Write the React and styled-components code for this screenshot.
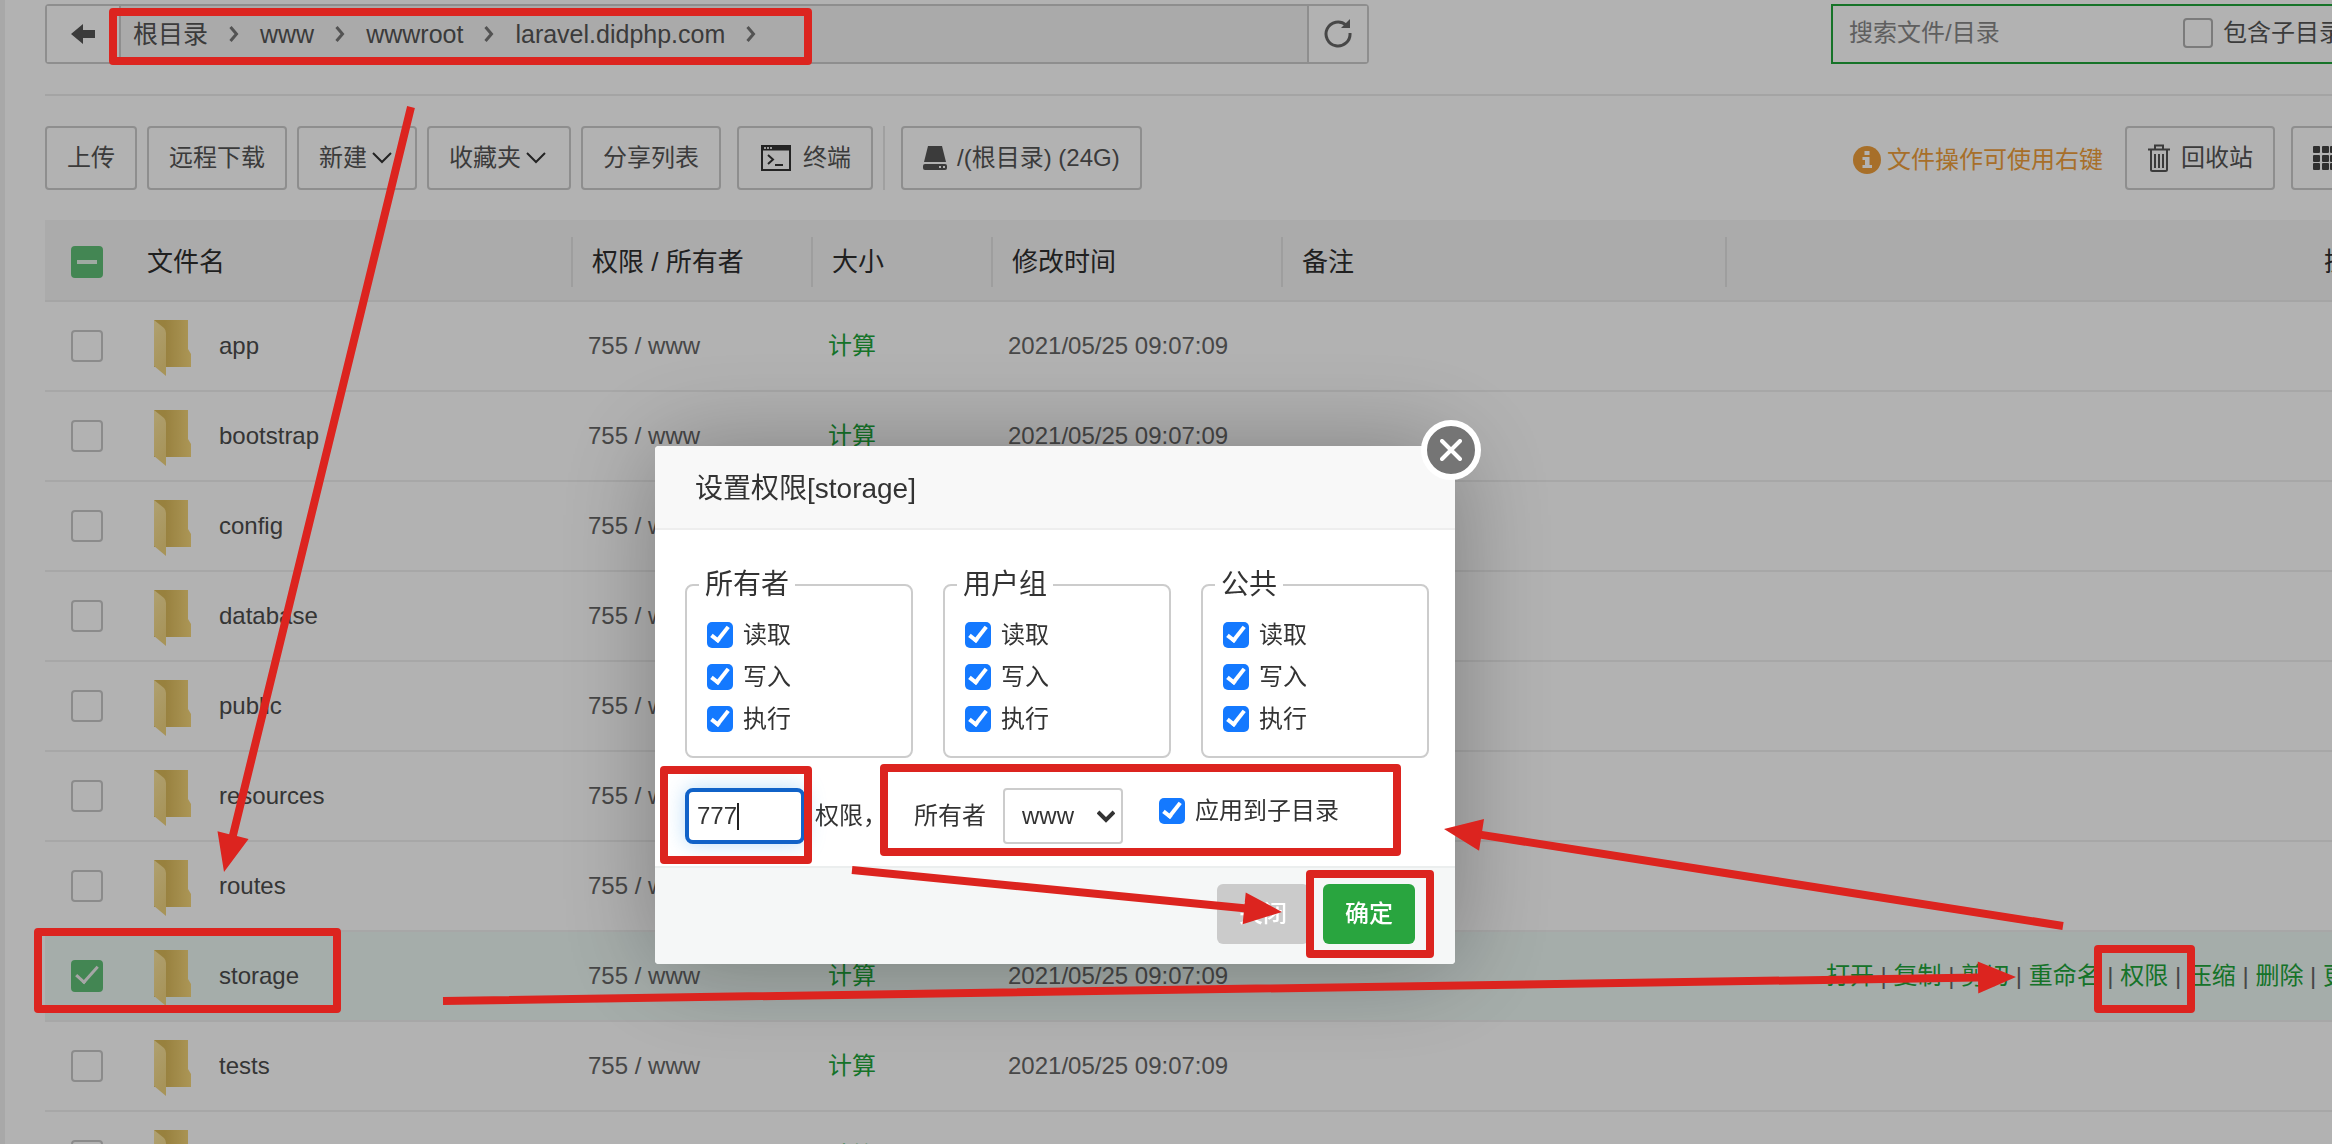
import React from "react";
import styled, { createGlobalStyle } from "styled-components";

const GlobalStyle = createGlobalStyle`
  * {
    box-sizing: border-box;
  }
  body {
    margin: 0;
    background: #fff;
    color: #555;
    font-family: "Liberation Sans", "Noto Sans CJK SC", sans-serif;
    font-size: 24px;
    line-height: 36px;
  }
  button, input, select {
    font: inherit;
    color: inherit;
  }
  a {
    color: #20a53a;
    text-decoration: none;
  }
`;

const Screen = styled.div`
  height: 100vh;
  overflow: hidden;
`;

// the file list is wider than the window, its right side runs off screen
const Page = styled.main`
  width: calc(100% + 60px);
  padding: 4px 0 0 40px;
  border-left: 5px solid #f1f1f1;
`;

const TopBar = styled.div`
  display: flex;
  justify-content: space-between;
  padding-bottom: 30px;
  border-bottom: 2px solid #ebebeb;
`;

const PathBar = styled.nav`
  display: flex;
  flex: 0 1 1324px;
  height: 60px;
  border: 2px solid #ccc;
  border-radius: 4px;
  background: #f4f4f4;
`;

const PathButton = styled.button`
  display: flex;
  align-items: center;
  justify-content: center;
  width: ${({ $wide }) => ($wide ? "74px" : "60px")};
  padding: 0;
  border: 0 solid #ccc;
  border-right-width: ${({ $wide }) => ($wide ? "2px" : "0")};
  border-left-width: ${({ $wide }) => ($wide ? "0" : "2px")};
  background: #fff;
`;

const Crumbs = styled.div`
  display: flex;
  align-items: center;
  flex: 1;
  gap: 21px;
  padding-left: 12px;
  font-size: 25px;

  a {
    color: #555;
  }
`;

const SearchBox = styled.div`
  display: flex;
  align-items: center;
  flex: 0 0 561px;
  height: 60px;
  padding: 0 16px 2px;
  border: 2px solid #20a53a;
`;

const SearchInput = styled.input`
  width: 334px;
  padding: 0;
  border: 0;
  outline: 0;
  background: none;

  &::placeholder {
    color: #888;
  }
`;

const CheckLabel = styled.label`
  display: flex;
  align-items: center;
  gap: 10px;
`;

const Checkbox = styled.input`
  appearance: none;
  display: flex;
  justify-content: center;
  width: 32px;
  height: 32px;
  margin: 0;
  border: 2px solid #c8c8c8;
  border-radius: 4px;

  &:checked {
    border-color: #60c177;
    background: #60c177;
  }
  &:checked::after {
    content: "";
    width: 9px;
    height: 19px;
    margin-top: -1px;
    border: solid #eee;
    border-width: 0 3px 3px 0;
    transform: rotate(42deg);
  }
`;

const PartialCheckbox = styled(Checkbox)`
  align-items: center;

  &:checked::after {
    width: 20px;
    height: 4px;
    margin: 0;
    border: 0;
    background: #e4f4e8;
    transform: none;
  }
`;

const SearchCheckbox = styled(Checkbox)`
  width: 30px;
  height: 30px;
  border-color: #b0b0b0;
`;

const Toolbar = styled.div`
  display: flex;
  align-items: center;
  gap: 10px;
  padding: 30px 0;
`;

const ToolButton = styled.button`
  display: flex;
  align-items: center;
  height: 64px;
  padding: 0 20px;
  margin-left: ${({ $apart }) => ($apart ? "6px" : "0")};
  border: 2px solid #ccc;
  border-radius: 4px;
  background: #fff;
  white-space: nowrap;
`;

const Caret = styled.svg`
  margin: 0 3px 0 5px;
`;

const TermIcon = styled.svg`
  margin: 0 12px 0 2px;
`;

const ButtonIcon = styled.svg`
  margin-right: 10px;
`;

const Divider = styled.span`
  width: 2px;
  height: 64px;
  background: #e6e6e6;
`;

const Tip = styled.div`
  display: flex;
  align-items: center;
  gap: 6px;
  margin: 4px 12px 0 auto;
  color: #f0a03c;
`;

const ViewSwitch = styled(ToolButton)`
  width: 101px;
`;

const FileTable = styled.table`
  width: 100%;
  table-layout: fixed;
  border-collapse: collapse;
`;

const HeadRow = styled.tr`
  height: 81px;
  background: #f5f5f5;
  border-bottom: 2px solid #ececec;
`;

const HeadCell = styled.th`
  padding: 4px 0 0;
  color: #2e2e2e;
  font-size: 26px;
  font-weight: 400;
  text-align: left;
`;

const HeadLabel = styled.div`
  padding-left: 19px;
  border-left: 2px solid #e2e2e2;
  line-height: 50px;
`;

const OpsHead = styled(HeadLabel)`
  padding-right: 16px;
  text-align: right;
`;

const Row = styled.tr`
  height: 90px;
  border-bottom: 2px solid #efefef;
  background: ${({ $active }) => ($active ? "#edf8f4" : "#fff")};
`;

const Cell = styled.td`
  padding: 0 0 0 17px;
  color: #666;
  white-space: nowrap;
`;

const CheckCell = styled.td`
  padding: 0 0 0 26px;
`;

const CheckHead = styled.th`
  padding: 3px 0 0 26px;
`;

const NameCell = styled.div`
  display: flex;
  align-items: center;
  gap: 27px;
  padding-left: 6px;
  color: #4c4c4c;

  svg {
    margin-top: 3px;
  }
`;

const OpsCell = styled(Cell)`
  padding-right: 21px;
  text-align: right;
`;

const Mask = styled.div`
  position: fixed;
  inset: 0;
  display: flex;
  align-items: center;
  justify-content: center;
  padding: 266px 222px 0 0;
  background: rgba(0, 0, 0, 0.3);
`;

const Dialog = styled.section`
  position: relative;
  width: 800px;
  border-radius: 4px;
  background: #fff;
  color: #333;
  box-shadow: 2px 2px 100px rgba(0, 0, 0, 0.3);
`;

const DialogTitle = styled.h2`
  margin: 0;
  padding: 4px 40px 0;
  border-bottom: 2px solid #eee;
  border-radius: 4px 4px 0 0;
  background: #f8f8f8;
  font-size: 28px;
  font-weight: 400;
  line-height: 78px;
`;

const CloseButton = styled.button`
  position: absolute;
  top: -26px;
  right: -26px;
  display: flex;
  align-items: center;
  justify-content: center;
  width: 60px;
  height: 60px;
  padding: 0;
  border: 6px solid #fff;
  border-radius: 50%;
  background: #757575;
`;

const DialogBody = styled.div`
  padding: 35px 26px 22px 30px;
`;

const Groups = styled.div`
  display: grid;
  grid-template-columns: repeat(3, 228px);
  gap: 30px;
`;

const Group = styled.fieldset`
  margin: 0;
  padding: 9px 12px 16px;
  border: 2px solid #ccc;
  border-radius: 8px;

  legend {
    padding: 0 6px;
    font-size: 28px;
    line-height: 40px;
  }
`;

const GroupItem = styled(CheckLabel)`
  height: 42px;
  padding-left: 8px;
`;

const BlueCheckbox = styled(Checkbox)`
  width: 26px;
  height: 26px;
  border: 0;
  border-radius: 5px;

  &:checked {
    background: #1479ff;
  }
  &:checked::after {
    width: 6px;
    height: 15px;
    margin-top: 1px;
    border: solid #fff;
    border-width: 0 4px 4px 0;
    transform: rotate(38deg);
  }
`;

const OwnerRow = styled.div`
  display: flex;
  align-items: center;
  margin-top: 30px;
`;

const ModeField = styled.div`
  position: relative;
  margin-right: 10px;

  /* text cursor */
  &::after {
    content: "";
    position: absolute;
    top: 15px;
    left: 52px;
    width: 2px;
    height: 27px;
    background: #222;
  }
`;

const ModeInput = styled.input`
  display: block;
  width: 120px;
  height: 56px;
  padding: 0 8px;
  border: 4px solid #1062c8;
  border-radius: 8px;
  outline: 0;
  box-shadow: 0 0 20px rgba(80, 170, 240, 0.4);
  caret-color: transparent;
`;

const OwnerLabel = styled.label`
  margin: 0 17px 0 27px;
`;

const SelectWrap = styled.div`
  position: relative;
  margin-right: 36px;

  select {
    appearance: none;
    display: block;
    width: 120px;
    height: 56px;
    padding: 0 17px;
    border: 2px solid #ccc;
    border-radius: 4px;
    background: #fff;
  }
  svg {
    position: absolute;
    top: 22px;
    right: 8px;
    pointer-events: none;
  }
`;

const SubdirLabel = styled(CheckLabel)`
  align-self: flex-start;
  height: 46px;
`;

const DialogFooter = styled.div`
  display: flex;
  justify-content: flex-end;
  gap: 14px;
  padding: 16px 40px 20px;
  border-top: 2px solid #ebeeee;
  border-radius: 0 0 4px 4px;
  background: #f5f7f7;
`;

const FooterButton = styled.button`
  width: 92px;
  height: 60px;
  padding: 0;
  border: 0;
  border-radius: 6px;
  background: ${({ $primary }) => ($primary ? "#29a53f" : "#cbcbcb")};
  color: #fff;
  font-weight: 500;
`;

const Marks = styled.svg`
  position: fixed;
  inset: 0;
  width: 100%;
  height: 100%;
  pointer-events: none;
`;

const crumbs = ["根目录", "www", "wwwroot", "laravel.didphp.com"];

const files = [
  "app",
  "bootstrap",
  "config",
  "database",
  "public",
  "resources",
  "routes",
  "storage",
  "tests",
  "vendor",
];

const actions = ["打开", "复制", "剪切", "重命名", "权限", "压缩", "删除", "更多"];

const groups = ["所有者", "用户组", "公共"];

const boxes = [
  [113, 12, 695, 49],
  [664, 770, 144, 90],
  [884, 768, 513, 84],
  [1310, 874, 120, 80],
  [38, 932, 299, 77],
  [2098, 949, 93, 60],
];

const arrows = [
  [411, 107, 224, 872],
  [852, 870, 1282, 912],
  [2063, 926, 1444, 829],
  [443, 1001, 2016, 977],
];

const Chevron = () => (
  <svg width="10" height="16" viewBox="0 0 10 16" fill="none" stroke="#777" strokeWidth="3">
    <path d="M1.5 1l6 7-6 7" />
  </svg>
);

const DownCaret = () => (
  <Caret width="20" height="12" viewBox="0 0 20 12" fill="none" stroke="#333" strokeWidth="2">
    <path d="M1 1l9 9 9-9" />
  </Caret>
);

const Folder = () => (
  <svg width="38" height="56" viewBox="0 0 38 56">
    <defs>
      <linearGradient id="back" x1="0" x2="1">
        <stop offset="0.3" stopColor="#dab95a" />
        <stop offset="1" stopColor="#f6d77c" />
      </linearGradient>
      <linearGradient id="flap" x1="0" y1="0" x2="0.3" y2="1">
        <stop offset="0" stopColor="#fbe6a2" />
        <stop offset="1" stopColor="#f0d480" />
      </linearGradient>
    </defs>
    <path d="M0 0h34v29l3 5v13H0z" fill="url(#back)" />
    <path d="M0 0l10 8q2 2 2 5v43L0 46z" fill="url(#flap)" />
  </svg>
);

const Arrow = ({ from, to }) => {
  const [x1, y1] = from;
  const [x2, y2] = to;
  const length = Math.hypot(x2 - x1, y2 - y1);
  const angle = (Math.atan2(y2 - y1, x2 - x1) * 180) / Math.PI;
  return (
    <g transform={`translate(${x1} ${y1}) rotate(${angle})`}>
      <path d={`M0-4H${length - 38}V-16L${length} 0L${length - 38} 16V4H0z`} />
    </g>
  );
};

const FileRow = ({ name, active }) => (
  <Row $active={active}>
    <CheckCell>
      <Checkbox type="checkbox" defaultChecked={active} aria-label={name} />
    </CheckCell>
    <td>
      <NameCell>
        <Folder />
        {name}
      </NameCell>
    </td>
    <Cell>755 / www</Cell>
    <Cell>
      <a href="#size">计算</a>
    </Cell>
    <Cell>2021/05/25 09:07:09</Cell>
    <Cell />
    <OpsCell>
      {active &&
        actions.map((action, i) => (
          <React.Fragment key={action}>
            {i > 0 && " | "}
            <a href="#action">{action}</a>
          </React.Fragment>
        ))}
    </OpsCell>
  </Row>
);

const PermissionDialog = () => (
  <Dialog role="dialog" aria-labelledby="dialog-title">
    <DialogTitle id="dialog-title">设置权限[storage]</DialogTitle>
    <CloseButton aria-label="close">
      <svg width="22" height="22" viewBox="0 0 22 22" stroke="#fff" strokeWidth="4" strokeLinecap="round">
        <path d="M2 2l18 18M20 2L2 20" />
      </svg>
    </CloseButton>
    <DialogBody>
      <Groups>
        {groups.map((group) => (
          <Group key={group}>
            <legend>{group}</legend>
            {["读取", "写入", "执行"].map((right) => (
              <GroupItem key={right}>
                <BlueCheckbox type="checkbox" defaultChecked />
                {right}
              </GroupItem>
            ))}
          </Group>
        ))}
      </Groups>
      <OwnerRow>
        <ModeField>
          <ModeInput id="mode" defaultValue="777" />
        </ModeField>
        <label htmlFor="mode">权限，</label>
        <OwnerLabel htmlFor="owner">所有者</OwnerLabel>
        <SelectWrap>
          <select id="owner" defaultValue="www">
            <option>www</option>
            <option>root</option>
          </select>
          <svg width="18" height="14" viewBox="0 0 18 14" fill="none" stroke="#333" strokeWidth="4">
            <path d="M1 2l8 8 8-8" />
          </svg>
        </SelectWrap>
        <SubdirLabel>
          <BlueCheckbox type="checkbox" defaultChecked />
          应用到子目录
        </SubdirLabel>
      </OwnerRow>
    </DialogBody>
    <DialogFooter>
      <FooterButton>关闭</FooterButton>
      <FooterButton $primary>确定</FooterButton>
    </DialogFooter>
  </Dialog>
);

const App = () => {
  return (
    <Screen>
      <GlobalStyle />
      <Page>
        <TopBar>
          <PathBar>
            <PathButton $wide aria-label="back">
              <svg width="24" height="20" viewBox="0 0 24 20" fill="#555">
                <path d="M0 10L12 0v6h12v8H12v6z" />
              </svg>
            </PathButton>
            <Crumbs>
              {crumbs.map((crumb) => (
                <React.Fragment key={crumb}>
                  <a href="#path">{crumb}</a>
                  <Chevron />
                </React.Fragment>
              ))}
            </Crumbs>
            <PathButton aria-label="refresh">
              <svg width="30" height="30" viewBox="0 0 30 30" fill="none" stroke="#666" strokeWidth="3">
                <path d="M27 14a12 12 0 1 1-4-8" />
                <path d="M27 0v9h-9z" fill="#666" stroke="none" />
              </svg>
            </PathButton>
          </PathBar>
          <SearchBox>
            <SearchInput placeholder="搜索文件/目录" aria-label="搜索文件/目录" />
            <CheckLabel>
              <SearchCheckbox type="checkbox" />
              包含子目录
            </CheckLabel>
          </SearchBox>
        </TopBar>
        <Toolbar>
          <ToolButton>上传</ToolButton>
          <ToolButton>远程下载</ToolButton>
          <ToolButton>
            新建
            <DownCaret />
          </ToolButton>
          <ToolButton>
            收藏夹
            <DownCaret />
          </ToolButton>
          <ToolButton>分享列表</ToolButton>
          <ToolButton $apart>
            <TermIcon width="30" height="26" viewBox="0 0 30 26" fill="none" stroke="#333" strokeWidth="2">
              <path d="M1 1h28v24H1z" />
              <path d="M1 3h28" strokeWidth="5" />
              <path d="M3 3h8" stroke="#ddd" strokeDasharray="2 1" />
              <path d="M7 10l5 4.500L7 19M14 20h8" />
            </TermIcon>
            终端
          </ToolButton>
          <Divider />
          <ToolButton $apart>
            <ButtonIcon width="24" height="24" viewBox="0 0 24 24" fill="#555">
              <path d="M5 0h14l4 16H1z" />
              <rect y="18" width="24" height="6" rx="2" />
              <path d="M16 20h2v2h-2zM20 20h2v2h-2z" fill="#fff" />
            </ButtonIcon>
            /(根目录) (24G)
          </ToolButton>
          <Tip>
            <svg width="28" height="28" viewBox="0 0 28 28">
              <circle cx="14" cy="14" r="14" fill="#f0a03c" />
              <path d="M11.500 5h5v4h-5zM9.500 11h7v8h2.500v3h-9.500v-3h2.500v-5h-2.500z" fill="#fff" />
            </svg>
            文件操作可使用右键
          </Tip>
          <ToolButton>
            <ButtonIcon width="24" height="28" viewBox="-2 0 24 28" fill="none" stroke="#555" strokeWidth="2">
              <path d="M-1 5.500h22M6 5V1.500h8V5M2 6v19.500q0 1.500 1.500 1.500h13q1.500 0 1.500-1.500V6M6 10v14M10 10v14M14 10v14" />
            </ButtonIcon>
            回收站
          </ToolButton>
          <ViewSwitch $apart aria-label="view">
            <svg width="24" height="24" viewBox="0 0 24 24" fill="#444">
              {[0, 9, 17].map((y) =>
                [0, 9, 17].map((x) => (
                  <rect key={`${x}-${y}`} x={x} y={y} width="7" height="7" rx="1" />
                ))
              )}
            </svg>
          </ViewSwitch>
        </Toolbar>
        <FileTable>
          <colgroup>
            <col width="102" />
            <col width="424" />
            <col width="240" />
            <col width="180" />
            <col width="290" />
            <col width="444" />
            <col />
          </colgroup>
          <thead>
            <HeadRow>
              <CheckHead>
                <PartialCheckbox type="checkbox" defaultChecked aria-label="全选" />
              </CheckHead>
              <HeadCell>文件名</HeadCell>
              {["权限 / 所有者", "大小", "修改时间", "备注"].map((title) => (
                <HeadCell key={title}>
                  <HeadLabel>{title}</HeadLabel>
                </HeadCell>
              ))}
              <HeadCell>
                <OpsHead>操作</OpsHead>
              </HeadCell>
            </HeadRow>
          </thead>
          <tbody>
            {files.map((name) => (
              <FileRow key={name} name={name} active={name === "storage"} />
            ))}
          </tbody>
        </FileTable>
      </Page>
      <Mask>
        <PermissionDialog />
      </Mask>
      <Marks fill="#dc241f">
        {boxes.map(([x, y, width, height]) => (
          <rect
            key={`${x}-${y}`}
            x={x}
            y={y}
            width={width}
            height={height}
            fill="none"
            stroke="#dc241f"
            strokeWidth="8"
            strokeLinejoin="round"
          />
        ))}
        {arrows.map(([x1, y1, x2, y2]) => (
          <Arrow key={x1} from={[x1, y1]} to={[x2, y2]} />
        ))}
      </Marks>
    </Screen>
  );
};

export default App;
